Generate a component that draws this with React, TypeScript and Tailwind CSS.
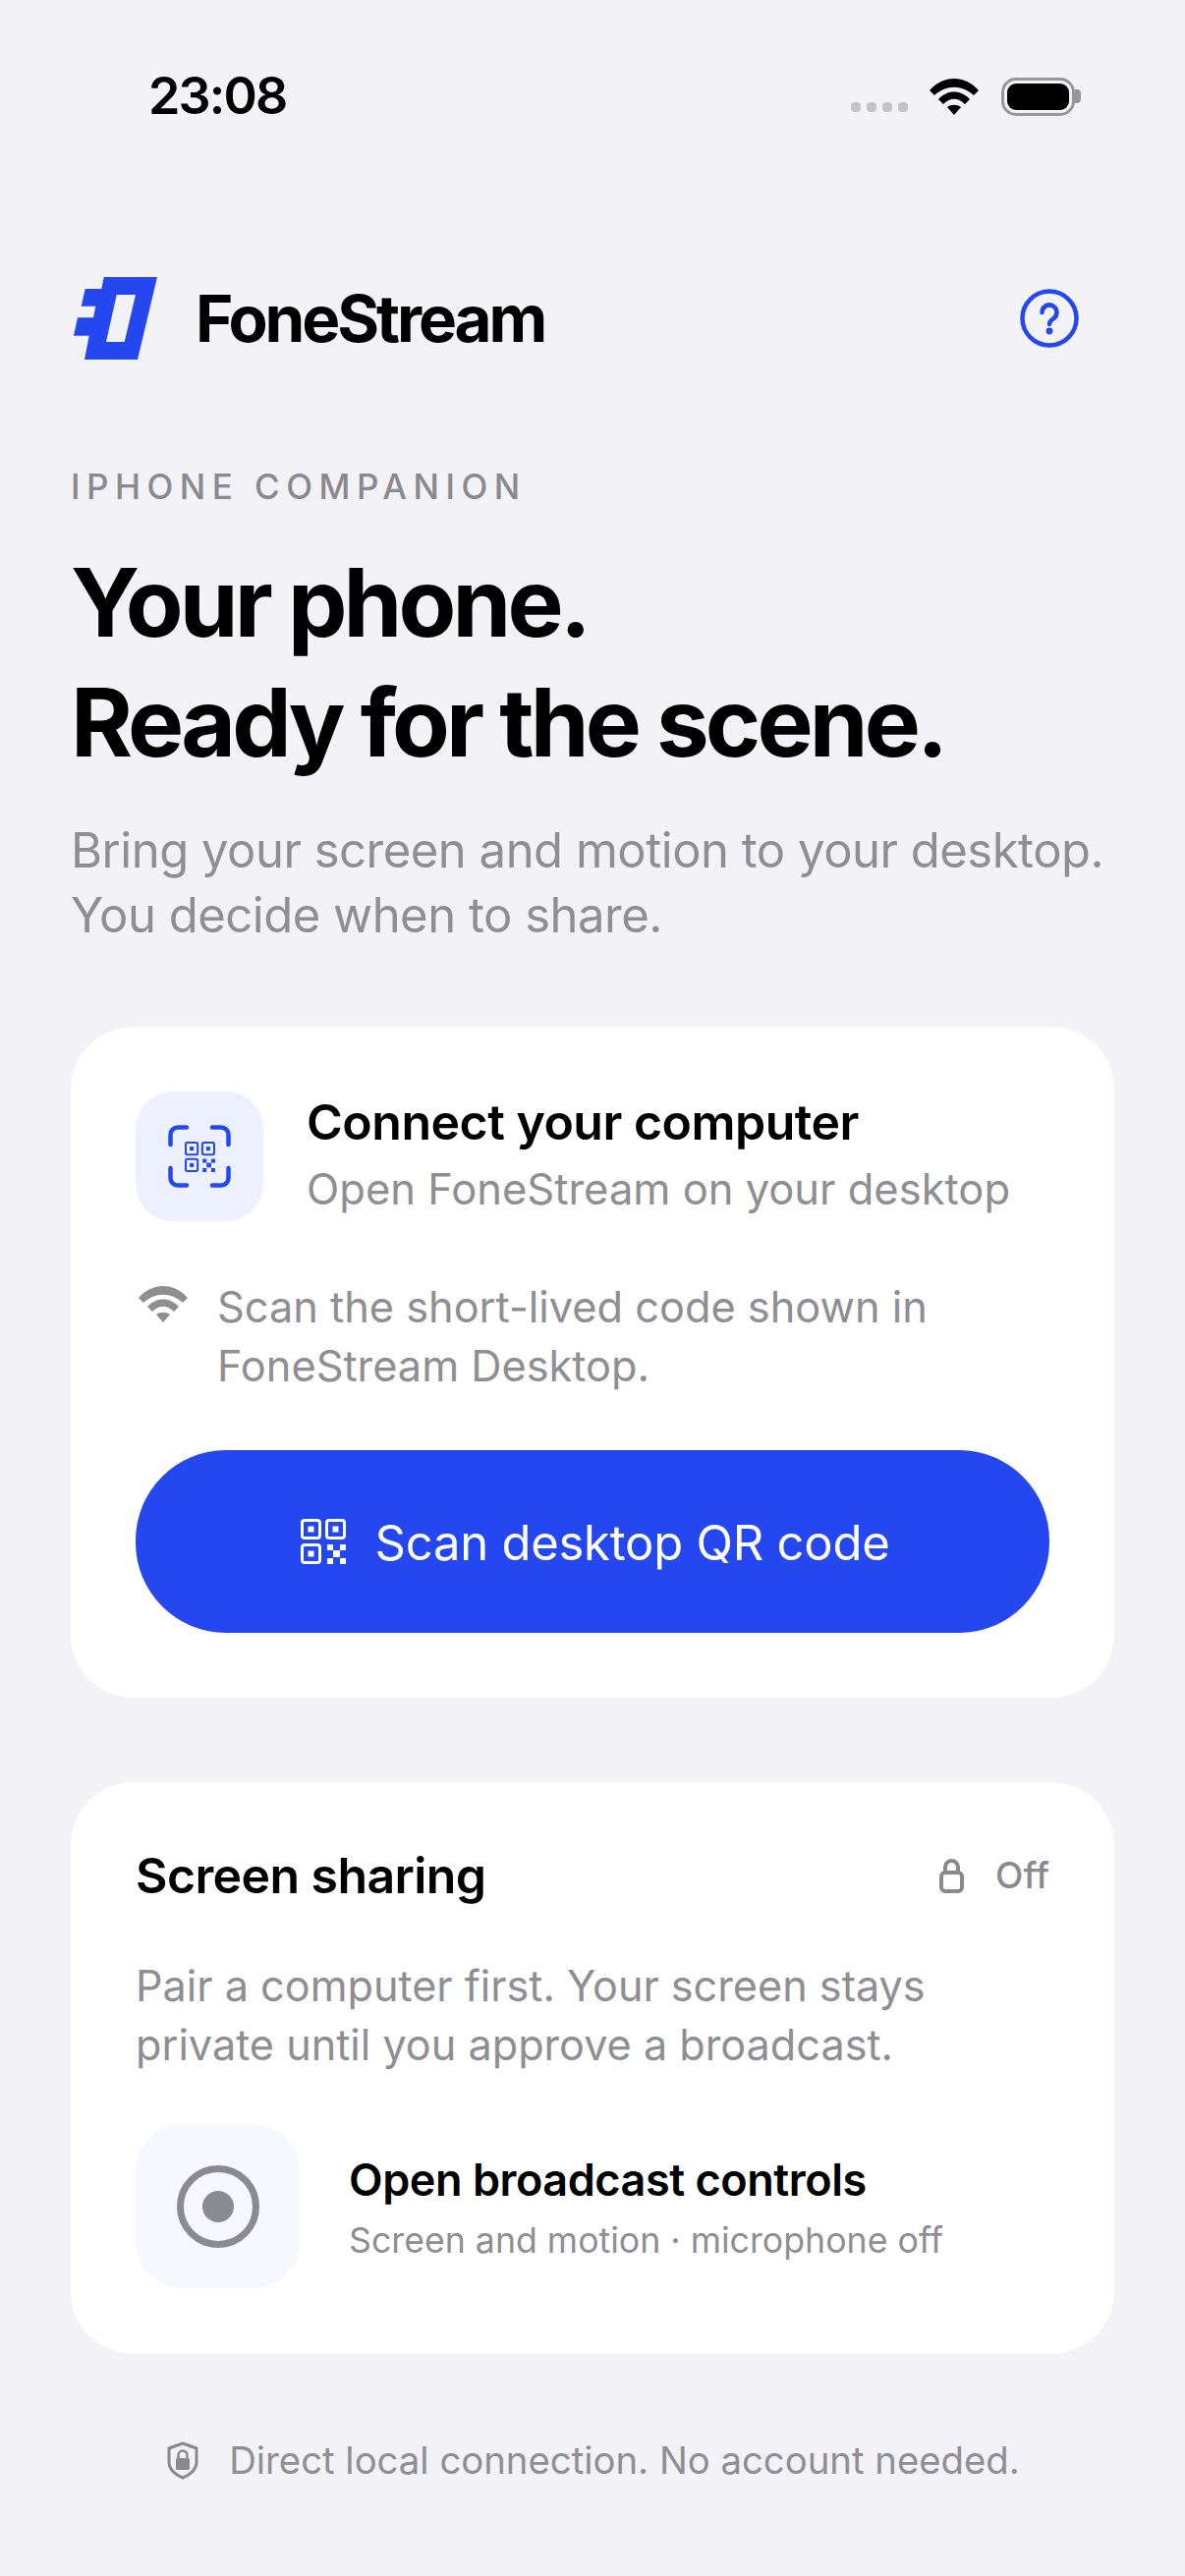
import React from 'react';

const FoneLogo = () => (
  <svg width="85" height="84" viewBox="0 0 85 84" className="shrink-0">
    <path
      fillRule="evenodd"
      fill="#2447f0"
      d="M30.7 0H85L65 84H11L15.7 59.7H0L4 41.3H20L22.3 29.7H7.7L11.7 12H28.3Z M43.7 18H63L51.7 66H33Z"
    />
  </svg>
);

const HelpIcon = () => (
  <svg width="60" height="60" viewBox="0 0 60 60" fill="none" stroke="#2447f0" strokeWidth="4.5" strokeLinecap="round">
    <circle cx="30" cy="30" r="27.5" />
    <path d="M22.5 24a7.5 7.5 0 1 1 11.5 6.3c-2.6 1.6-4 3-4 5.7" />
    <circle cx="30" cy="43" r="1.2" fill="#2447f0" />
  </svg>
);

const WifiIcon = ({ color, className }: { color: string; className?: string }) => (
  <svg viewBox="0 0 50 37" className={className}>
    <path fill={color} d="M0 12 C14 -4 36 -4 50 12 L45 17 C33 6 17 6 5 17Z" />
    <path fill={color} d="M9 21 C18 11 32 11 41 21 L36 26 C29 19 21 19 14 26Z" />
    <path fill={color} d="M18 29 C22 26 28 26 32 29 L25 37Z" />
  </svg>
);

const StatusBar = () => (
  <div className="flex items-center justify-between h-[60px] pl-[79px] pr-[34px]">
    <span className="text-[52px] font-semibold tracking-[-0.035em] text-black">23:08</span>
    <div className="flex items-center">
      <div className="flex gap-[6px] mt-[22px]">
        <span className="w-[10px] h-[10px] rounded-[4px] bg-[#c4c4c8]" />
        <span className="w-[10px] h-[10px] rounded-[4px] bg-[#c4c4c8]" />
        <span className="w-[10px] h-[10px] rounded-[4px] bg-[#c4c4c8]" />
        <span className="w-[10px] h-[10px] rounded-[4px] bg-[#c4c4c8]" />
      </div>
      <WifiIcon color="#000" className="w-[50px] h-[37px] ml-[22px]" />
      <div className="flex items-center ml-[23px]">
        <div className="w-[75px] h-[39px] rounded-[15px] border-[3px] border-[#97979b] p-[3px]">
          <div className="w-full h-full rounded-[9px] bg-black" />
        </div>
        <div className="w-[6px] h-[14px] rounded-r-[4px] bg-[#97979b]" />
      </div>
    </div>
  </div>
);

const QrGlyph = ({ color, size }: { color: string; size: number }) => (
  <svg width={size} height={size} viewBox="0 0 46 46" fill="none">
    <g stroke={color} strokeWidth="3">
      <rect x="1.5" y="1.5" width="18" height="18" rx="2.5" />
      <rect x="26.5" y="1.5" width="18" height="18" rx="2.5" />
      <rect x="1.5" y="26.5" width="18" height="18" rx="2.5" />
    </g>
    <g fill={color}>
      <rect x="7.5" y="7.5" width="6" height="6" />
      <rect x="32.5" y="7.5" width="6" height="6" />
      <rect x="7.5" y="32.5" width="6" height="6" />
      <rect x="27" y="26" width="6" height="6" />
      <rect x="40" y="26" width="6" height="6" />
      <rect x="33" y="32" width="7" height="7" />
      <rect x="27" y="40" width="6" height="6" />
      <rect x="40" y="40" width="6" height="6" />
    </g>
  </svg>
);

const ScanIcon = () => (
  <div className="relative w-[64px] h-[64px] flex items-center justify-center">
    <svg width="64" height="64" viewBox="0 0 64 64" fill="none" className="absolute inset-0" stroke="#2447f0" strokeWidth="4.5" strokeLinecap="round">
      <path d="M2.5 20V10a7.5 7.5 0 0 1 7.5-7.5h9" />
      <path d="M45 2.5h9a7.5 7.5 0 0 1 7.5 7.5v10" />
      <path d="M2.5 44v10a7.5 7.5 0 0 0 7.5 7.5h9" />
      <path d="M45 61.5h9a7.5 7.5 0 0 0 7.5-7.5V44" />
    </svg>
    <QrGlyph color="#2447f0" size={31} />
  </div>
);

const App = () => {
  return (
    <div
      className="w-[1206px] h-[2622px] bg-[#f2f2f7] overflow-hidden px-[72px] pt-[68px]"
      style={{ fontFamily: 'Inter, "Liberation Sans", sans-serif' }}
    >
      <StatusBar />

      <div className="flex items-center justify-between mt-[152px] pl-[3px] pr-[36px] h-[88px]">
        <div className="flex items-center gap-[39px]">
          <FoneLogo />
          <span className="text-[65.5px] font-bold tracking-[-0.047em] text-black leading-none mt-[1px]">FoneStream</span>
        </div>
        <HelpIcon />
      </div>

      <p className="mt-[105px] text-[35px] leading-[44px] font-medium tracking-[0.185em] text-[#8a8a8e]">IPHONE COMPANION</p>

      <h1 className="mt-[35px] text-[96px] leading-[122px] font-bold tracking-[-0.04em] text-black">
        Your phone.
        <br />
        Ready for the scene.
      </h1>

      <p className="mt-[37px] text-[49px] leading-[66px] tracking-[-0.01em] text-[#8e8e93]">
        Bring your screen and motion to your desktop.
        <br />
        You decide when to share.
      </p>

      <section className="mt-[80px] h-[683px] bg-white rounded-[64px] p-[66px]">
        <div className="flex items-center gap-[44px]">
          <div className="w-[130px] h-[132px] rounded-[38px] bg-[#edf0fe] flex items-center justify-center">
            <ScanIcon />
          </div>
          <div className="-mt-[6px]">
            <h2 className="text-[50px] leading-[66px] font-semibold tracking-[-0.01em] text-black">Connect your computer</h2>
            <p className="mt-[6px] text-[43.5px] leading-[58px] text-[#8e8e93]">Open FoneStream on your desktop</p>
          </div>
        </div>

        <div className="flex gap-[30px] mt-[57px] pl-[3px]">
          <WifiIcon color="#8e8e93" className="w-[50px] h-[37px] shrink-0 mt-[9px]" />
          <p className="text-[43.3px] leading-[60px] text-[#8e8e93]">
            Scan the short-lived code shown in
            <br />
            FoneStream Desktop.
          </p>
        </div>

        <button className="mt-[56px] w-full h-[186px] rounded-[92px] bg-[#2447f0] flex items-center justify-center gap-[29px] pl-[6px] text-white text-[49px] tracking-[-0.005em]">
          <QrGlyph color="#fff" size={46} />
          <span className="mt-[3px]">Scan desktop QR code</span>
        </button>
      </section>

      <section className="mt-[86px] h-[582px] bg-white rounded-[64px] px-[66px] pt-[62px]">
        <div className="flex items-center justify-between">
          <h2 className="text-[50px] leading-[66px] font-semibold tracking-[-0.012em] text-black">Screen sharing</h2>
          <div className="flex items-center gap-[32px] text-[#8a8a8e]">
            <svg width="25" height="35" viewBox="0 0 25 35" fill="none" stroke="#8a8a8e" strokeWidth="4">
              <rect x="2" y="14" width="21" height="19" rx="4" />
              <path d="M6 14V8.5a6.5 6.5 0 0 1 13 0V14" />
            </svg>
            <span className="text-[37px] font-medium">Off</span>
          </div>
        </div>

        <p className="mt-[49px] text-[43.2px] leading-[60px] text-[#8e8e93]">
          Pair a computer first. Your screen stays
          <br />
          private until you approve a broadcast.
        </p>

        <div className="flex items-center gap-[50px] mt-[51px]">
          <div className="w-[167px] h-[167px] rounded-[48px] bg-[#f6f7ff] flex items-center justify-center">
            <div className="w-[84px] h-[84px] rounded-full border-[7px] border-[#8a8a92] flex items-center justify-center">
              <div className="w-[32px] h-[32px] rounded-full bg-[#8a8a92]" />
            </div>
          </div>
          <div className="mt-[2px]">
            <h3 className="text-[45px] leading-[60px] font-semibold tracking-[-0.01em] text-black">Open broadcast controls</h3>
            <p className="mt-[6px] text-[35.7px] leading-[50px] text-[#8e8e93]">Screen and motion · microphone off</p>
          </div>
        </div>
      </section>

      <div className="flex items-center justify-center gap-[31px] mt-[83px] pl-[2px]">
        <svg width="32" height="39" viewBox="0 0 32 39" fill="none">
          <path d="M16 2 L30 7 V21 C30 28 24 34 16 37 C8 34 2 28 2 21 V7 Z" stroke="#8a8a8e" strokeWidth="3" strokeLinejoin="round" />
          <rect x="9" y="17" width="14" height="12" rx="1.5" fill="#8a8a8e" />
          <path d="M11.5 17v-3a4.5 4.5 0 0 1 9 0v3" stroke="#8a8a8e" strokeWidth="2.5" />
        </svg>
        <span className="text-[38.3px] leading-[50px] text-[#8e8e93]">Direct local connection. No account needed.</span>
      </div>
    </div>
  );
};

export default App;
